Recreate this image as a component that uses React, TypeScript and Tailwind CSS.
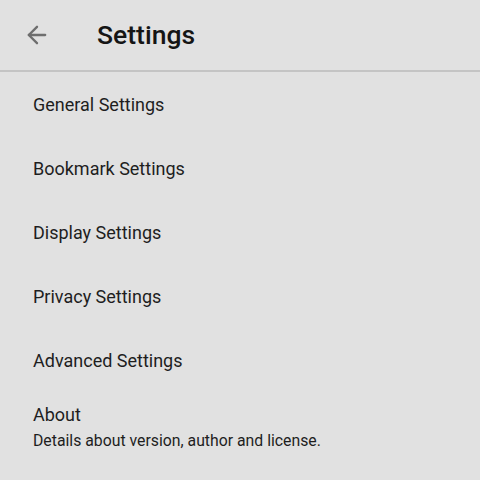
import { ArrowLeft } from 'lucide-react'

const items = [
  'General Settings',
  'Bookmark Settings',
  'Display Settings',
  'Privacy Settings',
  'Advanced Settings',
]

export default function App() {
  return (
    <div className="w-[480px] h-[480px] overflow-hidden bg-[#e1e1e1] font-['Roboto',sans-serif] text-[#1e1e1e]">
      <header className="h-[72px] flex items-center border-b-2 border-[#c4c4c4]">
        <button className="ml-[23px] w-[28px] text-[#6e6e6e]">
          <ArrowLeft size={28} strokeWidth={2} />
        </button>
        <h1 className="ml-[46px] text-[26.5px] font-medium text-[#151515]">Settings</h1>
      </header>
      <ul className="pl-[33px]">
        {items.map((item) => (
          <li key={item} className="h-[64px] flex items-center text-[18px]">
            {item}
          </li>
        ))}
        <li className="pt-[12px]">
          <p className="text-[18px] leading-[22px]">About</p>
          <p className="text-[15.8px] leading-[20px] mt-[5px]">Details about version, author and license.</p>
        </li>
      </ul>
    </div>
  )
}
